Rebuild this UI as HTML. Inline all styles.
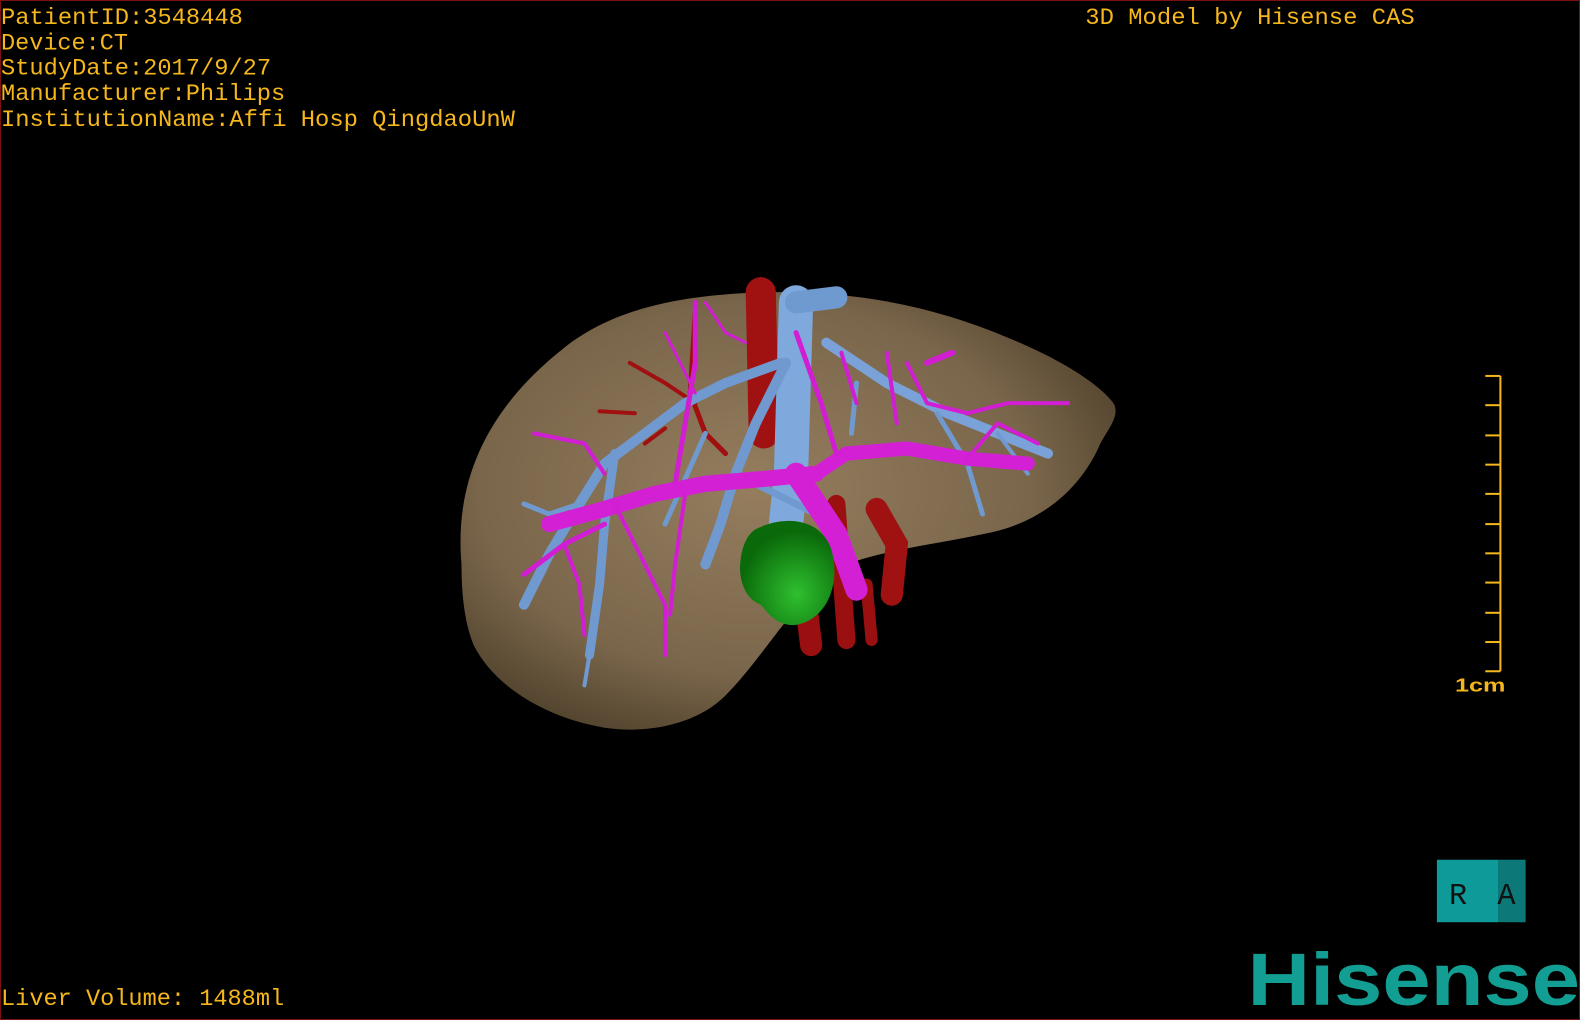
<!DOCTYPE html>
<html><head><meta charset="utf-8"><style>
html,body{margin:0;padding:0;background:#000;width:1580px;height:1020px;overflow:hidden}
svg{display:block}
.t{font-family:"Liberation Mono","Noto Sans CJK JP",monospace;font-size:23px;fill:#f5b71c}
</style></head><body>
<svg width="1580" height="1020" viewBox="0 0 1568 1012" preserveAspectRatio="none" xmlns="http://www.w3.org/2000/svg">
<defs>
<radialGradient id="lv" cx="0.45" cy="0.45" r="0.6">
<stop offset="0" stop-color="#957d5e"/><stop offset="0.7" stop-color="#7a664b"/><stop offset="1" stop-color="#54452f"/>
</radialGradient>
<radialGradient id="gb" cx="0.6" cy="0.7" r="0.6"><stop offset="0" stop-color="#2fc02f"/><stop offset="1" stop-color="#0a6a0a"/></radialGradient>
</defs>
<rect x="0" y="0" width="1568" height="1012" fill="#000" stroke="#7a1010" stroke-width="2"/>
<path d="M458,560 C450,470 490,400 560,345 C610,305 680,292 760,290 C850,288 930,305 1000,335 C1050,355 1090,380 1105,400 C1112,412 1100,425 1092,440 C1075,480 1040,515 985,528 C930,540 880,545 840,560 C790,590 760,650 720,690 C690,720 640,728 600,722 C540,712 490,680 470,640 C460,615 458,585 458,560 Z" fill="url(#lv)"/>
<g stroke-linecap="round" fill="none">
<path d="M755,290 L758,430" stroke="#a01212" stroke-width="30"/>
<path d="M830,500 L840,635" stroke="#9a1010" stroke-width="18"/>
<path d="M800,600 L805,640" stroke="#9a1010" stroke-width="22"/>
<path d="M870,505 L890,540 L885,590" stroke="#a01212" stroke-width="22"/>
<path d="M860,580 L865,635" stroke="#9a1010" stroke-width="12"/>
<path d="M690,310 L685,390 L700,430 L720,450" stroke="#a01010" stroke-width="5"/>
<path d="M625,360 L660,380 L690,400" stroke="#a01010" stroke-width="4"/>
<path d="M595,408 L630,410" stroke="#a01010" stroke-width="4"/>
<path d="M640,440 L660,425" stroke="#a01010" stroke-width="4"/>
<path d="M790,300 L785,470 L780,520" stroke="#7fa9dc" stroke-width="34"/>
<path d="M790,300 L830,295" stroke="#6f9ad0" stroke-width="22"/>
<path d="M775,360 L720,380 L680,400 L640,430 L600,460 L575,500 L545,550 L520,600" stroke="#7099cf" stroke-width="10"/>
<path d="M610,450 L600,520 L595,580 L585,650" stroke="#7099cf" stroke-width="9"/>
<path d="M585,650 L580,680" stroke="#7099cf" stroke-width="4"/>
<path d="M575,500 L545,510 L520,500" stroke="#7099cf" stroke-width="5"/>
<path d="M780,360 L750,420 L730,470 L715,520 L700,560" stroke="#7099cf" stroke-width="10"/>
<path d="M730,470 L770,490 L810,510" stroke="#7099cf" stroke-width="7"/>
<path d="M820,340 L880,380 L940,410 L990,430 L1040,450" stroke="#7aa2d8" stroke-width="10"/>
<path d="M930,410 L960,460 L975,510" stroke="#7099cf" stroke-width="5"/>
<path d="M990,430 L1020,470" stroke="#7099cf" stroke-width="4"/>
<path d="M850,380 L845,430" stroke="#7099cf" stroke-width="5"/>
<path d="M700,430 L660,520" stroke="#7099cf" stroke-width="5"/>
<path d="M545,520 L600,505 L650,490 L700,480 L760,475 L810,470" stroke="#d420d4" stroke-width="16"/>
<path d="M810,470 L840,450 L900,445 L960,455 L1020,460" stroke="#d420d4" stroke-width="14"/>
<path d="M790,470 L830,530 L850,585" stroke="#d420d4" stroke-width="22"/>
<path d="M520,570 L560,540 L600,520" stroke="#d21ed2" stroke-width="5"/>
<path d="M690,300 L690,360 L680,420 L670,480" stroke="#d21ed2" stroke-width="5"/>
<path d="M660,330 L690,390" stroke="#d21ed2" stroke-width="3"/>
<path d="M530,430 L580,440 L600,470" stroke="#d21ed2" stroke-width="4"/>
<path d="M560,540 L575,580 L580,630" stroke="#d21ed2" stroke-width="4"/>
<path d="M610,500 L640,560 L660,600 L660,650" stroke="#d21ed2" stroke-width="4"/>
<path d="M680,490 L670,560 L665,610" stroke="#d21ed2" stroke-width="4"/>
<path d="M790,330 L815,400 L830,450" stroke="#d21ed2" stroke-width="5"/>
<path d="M835,350 L850,400" stroke="#d21ed2" stroke-width="4"/>
<path d="M880,350 L890,420" stroke="#d21ed2" stroke-width="4"/>
<path d="M900,360 L920,400 L960,410 L1000,400 L1060,400" stroke="#d21ed2" stroke-width="4"/>
<path d="M920,360 L945,350" stroke="#d21ed2" stroke-width="6"/>
<path d="M960,455 L990,420 L1030,440" stroke="#d21ed2" stroke-width="4"/>
<path d="M700,300 L720,330 L740,340" stroke="#d21ed2" stroke-width="3"/>
</g>
<path d="M750,525 C780,510 815,515 825,545 C835,580 820,615 790,620 C770,622 760,605 755,600 C740,595 732,575 735,555 C737,540 742,530 750,525 Z" fill="url(#gb)"/>
<text class="t" x="1" y="24" textLength="240" lengthAdjust="spacingAndGlyphs">PatientID:3548448</text>
<text class="t" x="1" y="49" textLength="126" lengthAdjust="spacingAndGlyphs">Device:CT</text>
<text class="t" x="1" y="74" textLength="268" lengthAdjust="spacingAndGlyphs">StudyDate:2017/9/27</text>
<text class="t" x="1" y="99" textLength="282" lengthAdjust="spacingAndGlyphs">Manufacturer:Philips</text>
<text class="t" x="1" y="125" textLength="510" lengthAdjust="spacingAndGlyphs">InstitutionName:Affi Hosp QingdaoUnW</text>
<text class="t" x="1077" y="24" textLength="327" lengthAdjust="spacingAndGlyphs">3D Model by Hisense CAS</text>
<text class="t" x="1" y="997" textLength="281" lengthAdjust="spacingAndGlyphs">Liver Volume: 1488ml</text>
<g stroke="#f5b71c" stroke-width="2">
<line x1="1489" y1="373" x2="1489" y2="666"/>
<line x1="1474" y1="373" x2="1489" y2="373"/><line x1="1474" y1="402" x2="1489" y2="402"/>
<line x1="1474" y1="432" x2="1489" y2="432"/><line x1="1474" y1="461" x2="1489" y2="461"/>
<line x1="1474" y1="490" x2="1489" y2="490"/><line x1="1474" y1="520" x2="1489" y2="520"/>
<line x1="1474" y1="549" x2="1489" y2="549"/><line x1="1474" y1="578" x2="1489" y2="578"/>
<line x1="1474" y1="608" x2="1489" y2="608"/><line x1="1474" y1="637" x2="1489" y2="637"/>
<line x1="1474" y1="666" x2="1489" y2="666"/>
</g>
<text x="1444" y="686" font-family="Liberation Sans,sans-serif" font-size="18" fill="#f5b71c" font-weight="bold" textLength="50" lengthAdjust="spacingAndGlyphs">1cm</text>
<rect x="1426" y="853" width="61" height="62" fill="#0f9a9a"/>
<rect x="1487" y="853" width="27" height="62" fill="#0c7878"/>
<text x="1438" y="897" font-family="Liberation Mono,monospace" font-size="30" fill="#111">R</text>
<text x="1486" y="897" font-family="Liberation Mono,monospace" font-size="30" fill="#111">A</text>
<text x="1238" y="997" font-family="Liberation Sans,sans-serif" font-size="74" font-weight="bold" fill="#139e94" textLength="330" lengthAdjust="spacingAndGlyphs">Hisense</text>
</svg>
</body></html>
